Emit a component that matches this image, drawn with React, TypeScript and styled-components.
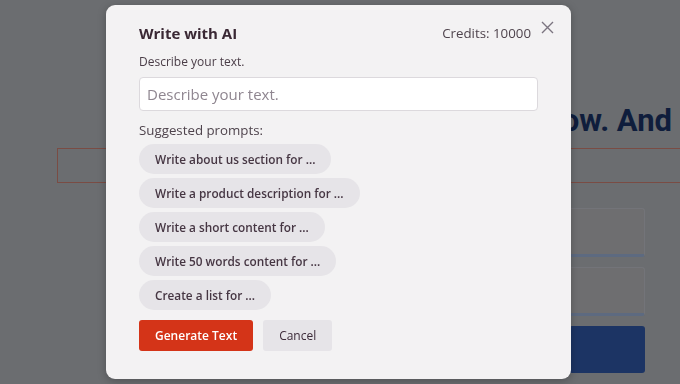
import styled, { createGlobalStyle } from "styled-components";

const prompts = [
  "Write about us section for ...",
  "Write a product description for ...",
  "Write a short content for ...",
  "Write 50 words content for ...",
  "Create a list for ...",
];

const GlobalStyle = createGlobalStyle`
  html, body {
    margin: 0;
    padding: 0;
    width: 680px;
    height: 384px;
    overflow: hidden;
    background: #6b6d70;
    font-family: "Open Sans", "Liberation Sans", sans-serif;
  }
`;

const App = () => {
  return (
    <>
      <GlobalStyle />
      <Page>
        <Heading>Get started now. And</Heading>
        <WideField />
        <SideForm>
          <SideField />
          <SideField />
          <SideButton />
        </SideForm>
      </Page>
      <Modal>
        <ModalHeader>
          <Title>Write with AI</Title>
          <Credits>Credits: 10000</Credits>
          <CloseButton aria-label="Close">
            <svg width="13" height="13" viewBox="0 0 13 13">
              <path d="M1 1 L12 12 M12 1 L1 12" stroke="#7b7480" strokeWidth="1.4" fill="none" />
            </svg>
          </CloseButton>
        </ModalHeader>
        <Label>Describe your text.</Label>
        <TextInput placeholder="Describe your text." />
        <SectionLabel>Suggested prompts:</SectionLabel>
        <PromptList>
          {prompts.map((p) => (
            <Pill key={p}>{p}</Pill>
          ))}
        </PromptList>
        <Actions>
          <Button $primary>Generate Text</Button>
          <Button>Cancel</Button>
        </Actions>
      </Modal>
    </>
  );
};

export default App;

// dimmed page behind the dialog
const Page = styled.div`
  width: 680px;
  height: 384px;
  display: flex;
  flex-direction: column;
  overflow: hidden;
`;

const Heading = styled.h1`
  margin: 103px 8px 0 0;
  align-self: flex-end;
  white-space: nowrap;
  font-family: Roboto, "Liberation Sans", sans-serif;
  font-weight: 700;
  font-size: 31px;
  line-height: 36px;
  color: #0f1d3c;
`;

const WideField = styled.div`
  margin: 9px 0 0 57px;
  height: 33px;
  border: 1.5px solid #7a4c44;
  border-right: none;
`;

const SideForm = styled.div`
  margin: 25px 35px 0 0;
  align-self: flex-end;
  width: 76px;
  display: flex;
  flex-direction: column;
  gap: 10px;
`;

const SideField = styled.div`
  height: 45px;
  border: 1px solid #737479;
  border-bottom: 3px solid #5d6a80;
  border-radius: 3px;
  background: #6e6e70;
`;

const SideButton = styled.div`
  height: 47px;
  border-radius: 3px;
  background: #1c3464;
`;

// dialog
const Modal = styled.div`
  position: fixed;
  top: 5px;
  left: 106px;
  width: 465px;
  height: 374px;
  box-sizing: border-box;
  padding: 16px 33px 0;
  background: #f3f2f3;
  border-radius: 9px;
  box-shadow: 0 2px 8px rgba(0, 0, 0, 0.25);
  color: #3c2a38;
`;

const ModalHeader = styled.div`
  position: relative;
  display: flex;
  align-items: center;
  justify-content: space-between;
  padding-right: 7px;
`;

const Title = styled.h2`
  margin: 0;
  font-size: 15px;
  line-height: 24px;
  font-weight: 700;
  color: #3a2834;
`;

const Credits = styled.span`
  font-size: 13.3px;
  line-height: 24px;
  color: #4f444d;
`;

const CloseButton = styled.button`
  position: absolute;
  right: -16px;
  top: 0;
  border: none;
  background: none;
  padding: 0;
  cursor: pointer;
  display: flex;
`;

const Label = styled.div`
  margin-top: 8px;
  font-size: 12px;
  line-height: 18px;
  color: #4a3d47;
`;

const TextInput = styled.input`
  display: block;
  margin-top: 6px;
  width: 399px;
  height: 34px;
  box-sizing: border-box;
  padding: 0 7px;
  border: 1px solid #dcd9dd;
  border-radius: 4px;
  background: #fff;
  font-family: inherit;
  font-size: 15px;
  &::placeholder {
    color: #8f8690;
  }
`;

const SectionLabel = styled.div`
  margin-top: 9px;
  font-size: 13.3px;
  line-height: 20px;
  color: #4f444d;
`;

const PromptList = styled.div`
  margin-top: 4px;
  display: flex;
  flex-direction: column;
  align-items: flex-start;
  gap: 4px;
`;

const Pill = styled.button`
  height: 30px;
  padding: 0 16px;
  border: none;
  border-radius: 15px;
  background: #e6e4e8;
  font-family: inherit;
  font-size: 11.8px;
  font-weight: 600;
  color: #463643;
  cursor: pointer;
`;

const Actions = styled.div`
  margin-top: 10px;
  display: flex;
  gap: 10px;
`;

const Button = styled.button<{ $primary?: boolean }>`
  height: 31px;
  padding: 0 16px;
  border: none;
  border-radius: 3px;
  background: ${(p) => (p.$primary ? "#d43418" : "#e6e4e8")};
  color: ${(p) => (p.$primary ? "#fff" : "#3c2a38")};
  font-family: inherit;
  font-size: 12px;
  font-weight: ${(p) => (p.$primary ? 600 : 400)};
  cursor: pointer;
`;
